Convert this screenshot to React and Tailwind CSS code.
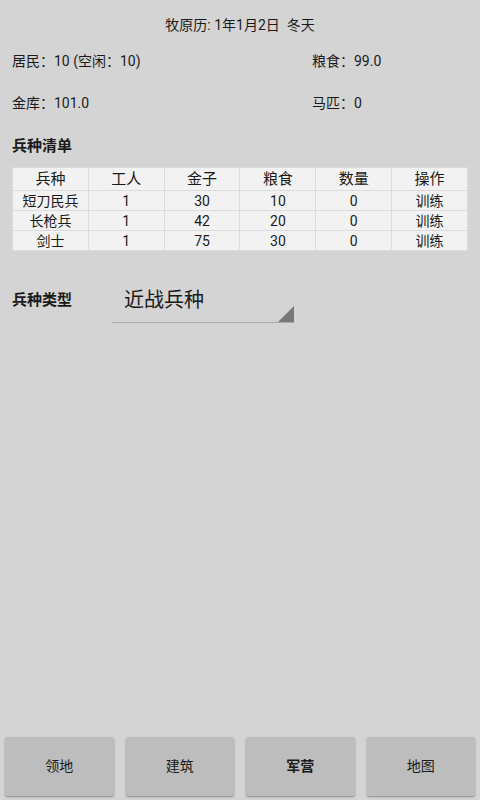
import React from "react";

const units = [
  { name: "短刀民兵", worker: 1, gold: 30, food: 10, count: 0 },
  { name: "长枪兵", worker: 1, gold: 42, food: 20, count: 0 },
  { name: "剑士", worker: 1, gold: 75, food: 30, count: 0 },
];

const headers = ["兵种", "工人", "金子", "粮食", "数量", "操作"];

const tabs = ["领地", "建筑", "军营", "地图"];

export default function App() {
  return (
    <div
      className="flex flex-col h-[800px] w-[480px] bg-[#d4d4d4] text-[#1a1a1a] overflow-hidden"
      style={{ fontFamily: 'Roboto, "Noto Sans CJK SC", sans-serif' }}
    >
      {/* 标题 */}
      <div className="h-[50px] flex items-center justify-center text-[14px]">
        牧原历: 1年1月2日&nbsp;&nbsp;冬天
      </div>

      {/* 资源 */}
      <div className="grid grid-cols-[300px_1fr] px-3 text-[14px]">
        <div className="h-[22px] flex items-center">居民：10 (空闲：10)</div>
        <div className="h-[22px] flex items-center">粮食：99.0</div>
        <div className="h-[22px] flex items-center mt-[20px]">金库：101.0</div>
        <div className="h-[22px] flex items-center mt-[20px]">马匹：0</div>
      </div>

      {/* 兵种清单 */}
      <div className="px-3 mt-[20px] h-[24px] flex items-center text-[15px] font-bold">
        兵种清单
      </div>
      <div className="px-3 mt-[9px]">
        <table className="w-full border-collapse table-fixed text-[14px]">
          <thead>
            <tr className="h-[23px]">
              {headers.map((h) => (
                <th
                  key={h}
                  className="font-normal text-[15px] bg-[#f2f2f2] border-[1.5px] border-[#dcdcdc] leading-none"
                >
                  {h}
                </th>
              ))}
            </tr>
          </thead>
          <tbody>
            {units.map((u) => (
              <tr key={u.name} className="h-[20px]">
                <td className="bg-[#f2f2f2] border-[1.5px] border-[#dcdcdc] text-center leading-none">{u.name}</td>
                <td className="bg-[#f2f2f2] border-[1.5px] border-[#dcdcdc] text-center leading-none">{u.worker}</td>
                <td className="bg-[#f2f2f2] border-[1.5px] border-[#dcdcdc] text-center leading-none">{u.gold}</td>
                <td className="bg-[#f2f2f2] border-[1.5px] border-[#dcdcdc] text-center leading-none">{u.food}</td>
                <td className="bg-[#f2f2f2] border-[1.5px] border-[#dcdcdc] text-center leading-none">{u.count}</td>
                <td className="bg-[#f2f2f2] border-[1.5px] border-[#dcdcdc] text-center leading-none">训练</td>
              </tr>
            ))}
          </tbody>
        </table>
      </div>

      {/* 兵种类型 */}
      <div className="flex items-start px-3 mt-[29px]">
        <div className="w-[100px] h-[40px] flex items-center text-[15px] font-bold">兵种类型</div>
        <div className="relative w-[182px] h-[43px] border-b border-[#aaaaaa]">
          <div className="h-[40px] flex items-center pl-3 text-[20px]">近战兵种</div>
          <svg className="absolute right-0 bottom-0" width="16" height="16" viewBox="0 0 16 16">
            <polygon points="16,0 16,16 0,16" fill="#777777" />
          </svg>
        </div>
      </div>

      {/* 底部按钮 */}
      <div className="mt-auto mb-[4px] flex gap-3 px-[5px]">
        {tabs.map((t) => (
          <button
            key={t}
            className={`flex-1 h-[59px] bg-[#bdbdbd] rounded-[2px] shadow-[0_1px_2px_rgba(0,0,0,0.35)] text-[14px] text-[#1a1a1a] ${
              t === "军营" ? "font-bold" : ""
            }`}
          >
            {t}
          </button>
        ))}
      </div>
    </div>
  );
}
